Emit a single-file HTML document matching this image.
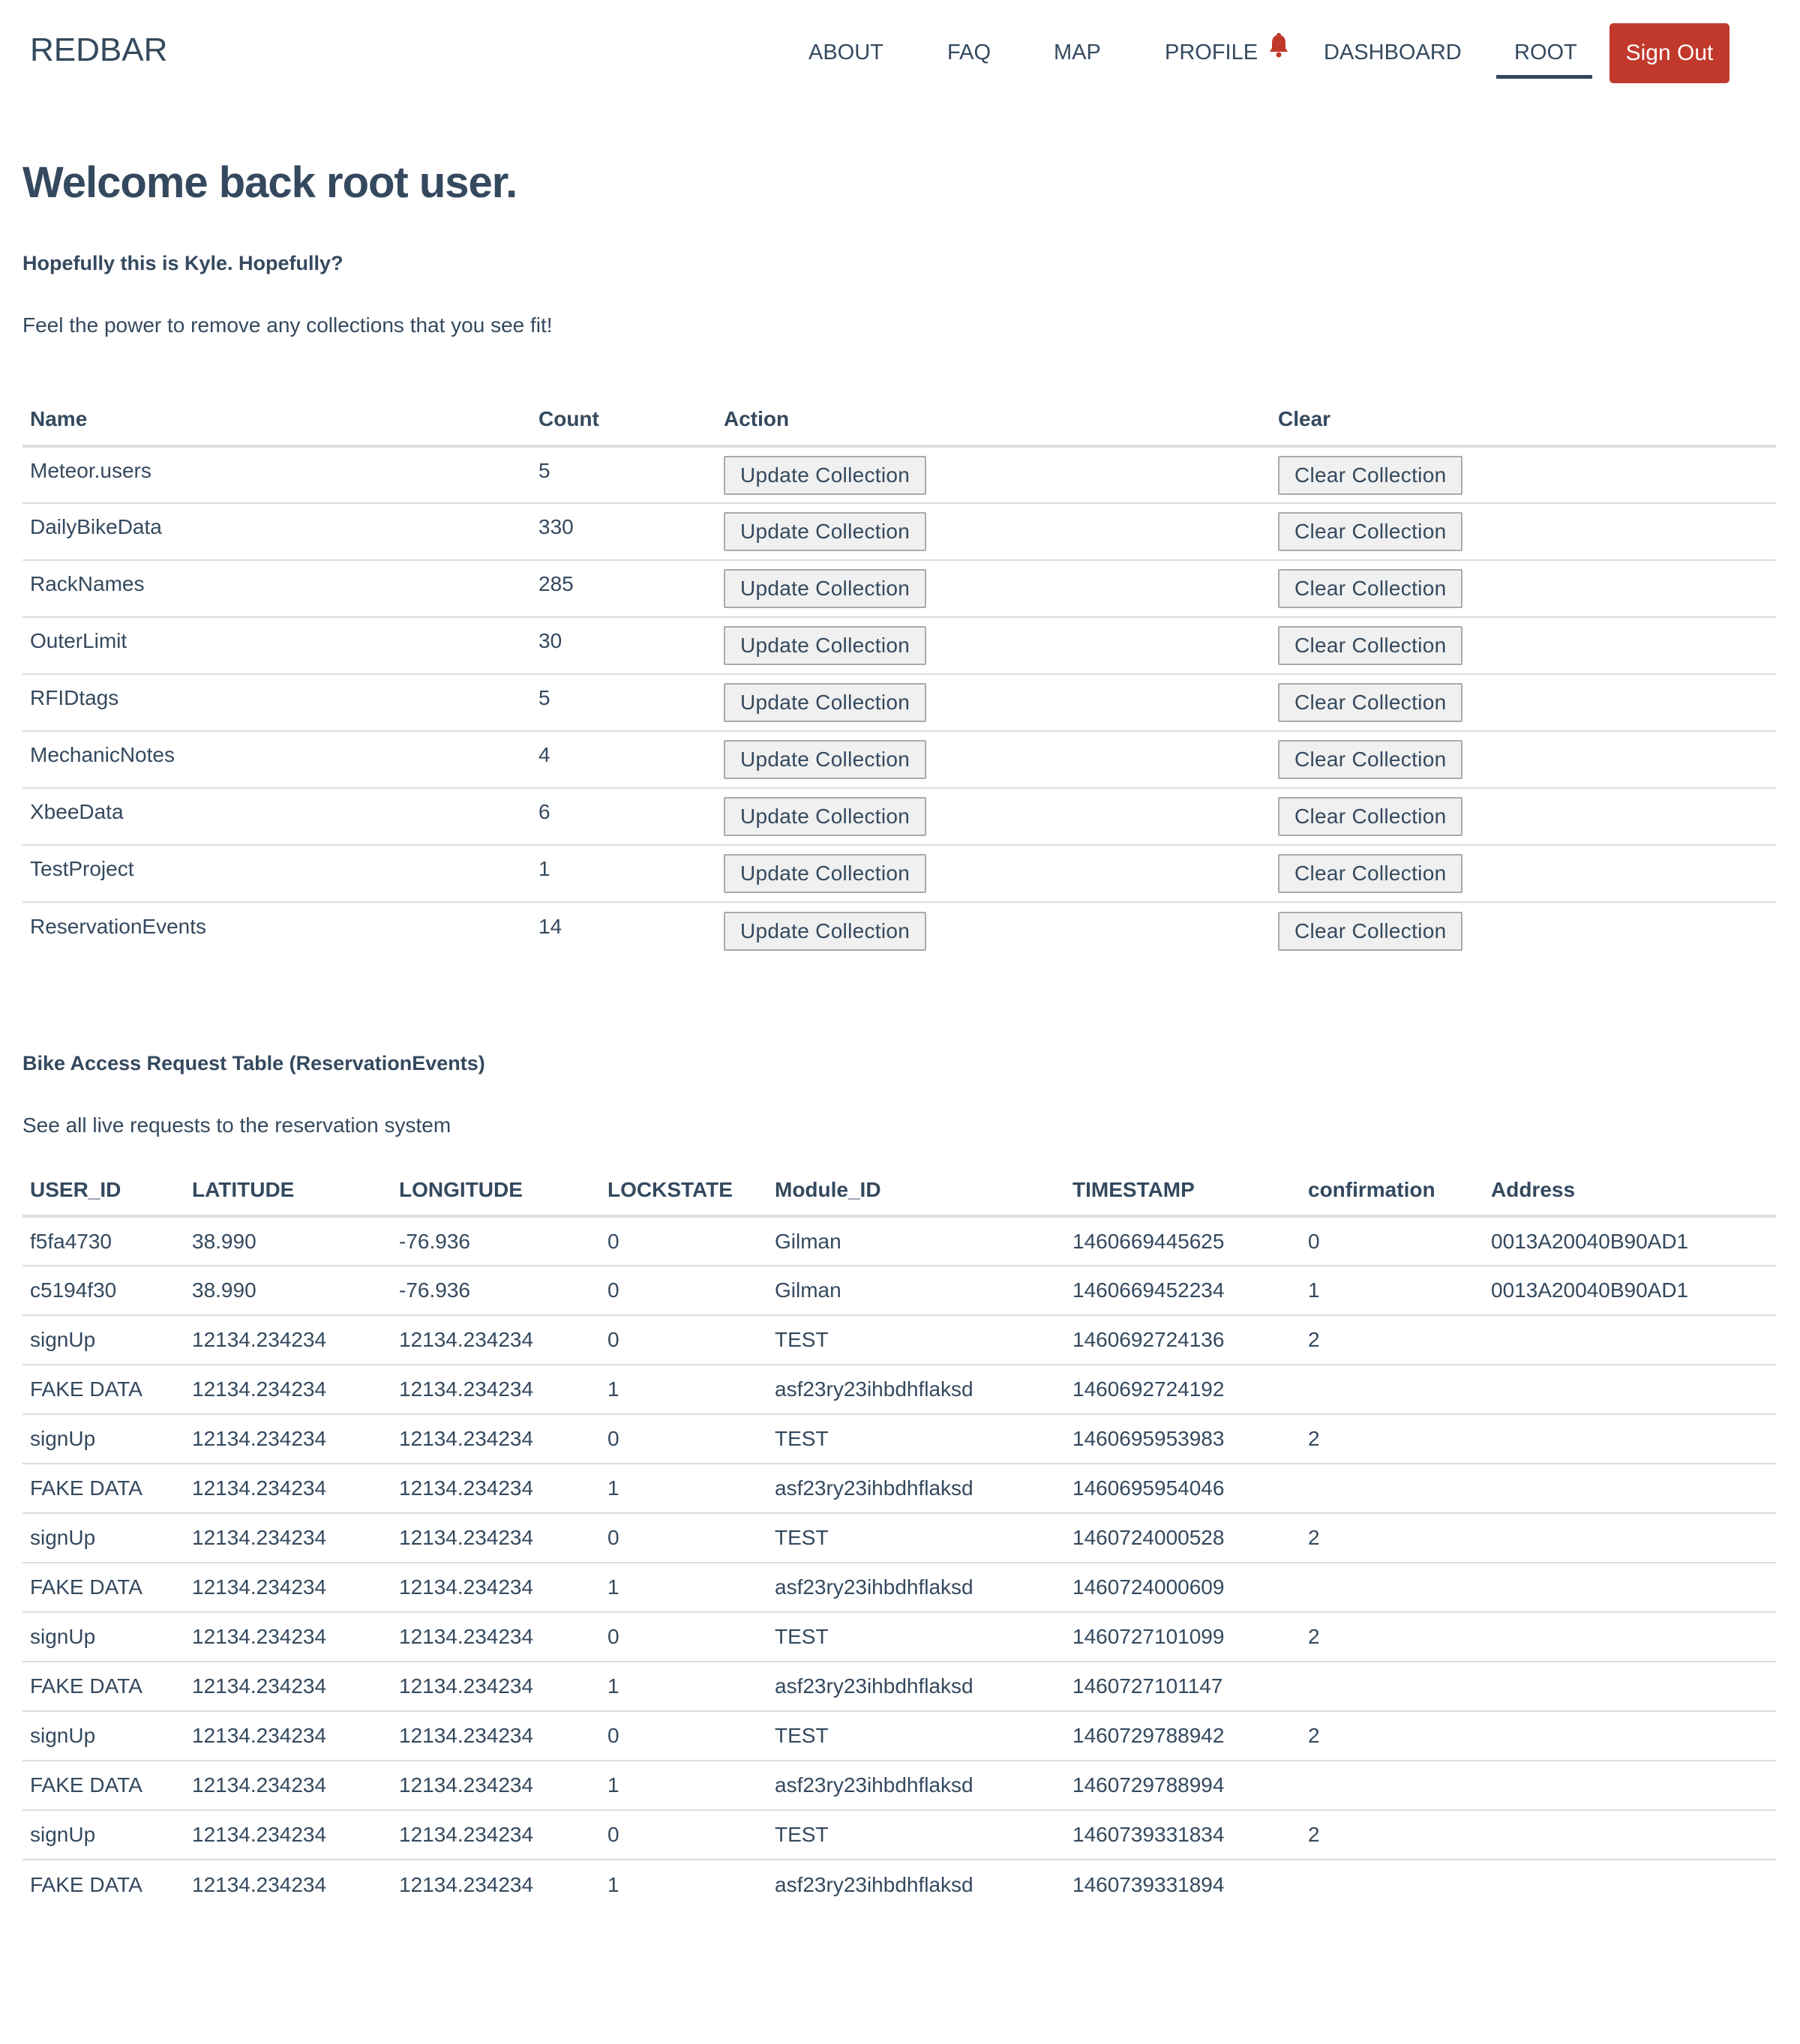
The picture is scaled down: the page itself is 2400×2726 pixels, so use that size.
<!DOCTYPE html>
<html><head><meta charset="utf-8"><style>
*{box-sizing:border-box;margin:0;padding:0}
body{width:2400px;height:2726px;background:#fff;font-family:"Liberation Sans",sans-serif;color:#34495e;position:relative;overflow:hidden}
.abs{position:absolute;white-space:nowrap}
.nav{font-size:29px;top:54px}
h1{position:absolute;left:30px;top:210px;font-size:58px;font-weight:bold;letter-spacing:-1px}
table{position:absolute;left:30px;width:2338px;border-collapse:collapse;table-layout:fixed}
td,th{text-align:left;padding:0 0 0 10px;font-size:28px;white-space:nowrap;overflow:hidden}
th{font-weight:bold;border-bottom:4px solid #ddd}
#t1 th{height:70px;vertical-align:middle}
#t1 td{height:76px;border-bottom:2px solid #ddd;vertical-align:middle}
#t1 td:nth-child(-n+2){padding-bottom:12px}
.btn{display:inline-block;border:2px solid #aaa;background:#f0f0f0;height:52px;line-height:48px;padding:0 20px;font-size:28px;color:#34495e;border-radius:2px;letter-spacing:0.3px}
#t2 th{height:68px}
#t2 td{height:66px;border-bottom:2px solid #ddd}
</style></head><body>
<div class="abs" style="left:40px;top:42px;font-size:44px">REDBAR</div>
<div class="abs nav" style="left:1078px">ABOUT</div>
<div class="abs nav" style="left:1263px">FAQ</div>
<div class="abs nav" style="left:1405px">MAP</div>
<div class="abs nav" style="left:1553px">PROFILE</div>
<svg class="abs" style="left:1690px;top:42px" width="30" height="36" viewBox="0 0 30 36"><path d="M15 2c-2 0-3 1.5-3 3C7 7 6 11 6 16v6l-3 5h24l-3-5v-6c0-5-1-9-6-11 0-1.5-1-3-3-3z" fill="#c0392b"/><circle cx="15" cy="31" r="3.5" fill="#c0392b"/></svg>
<div class="abs nav" style="left:1765px">DASHBOARD</div>
<div class="abs nav" style="left:2019px">ROOT</div>
<div class="abs" style="left:1995px;top:100px;width:128px;height:5px;background:#34495e"></div>
<div class="abs" style="left:2146px;top:31px;width:160px;height:80px;background:#c0392b;border-radius:5px;color:#fff;font-size:30px;line-height:80px;text-align:center">Sign Out</div>
<h1>Welcome back root user.</h1>
<div class="abs" style="left:30px;top:336px;font-size:27px;font-weight:bold">Hopefully this is Kyle. Hopefully?</div>
<div class="abs" style="left:30px;top:418px;font-size:28px">Feel the power to remove any collections that you see fit!</div>
<table id="t1" style="top:525px">
<colgroup><col style="width:678px"><col style="width:257px"><col style="width:739px"><col></colgroup>
<tr><th>Name</th><th>Count</th><th style="padding-left:0">Action</th><th style="padding-left:0">Clear</th></tr>
<tr><td>Meteor.users</td><td>5</td><td style="padding-left:0"><span class="btn">Update Collection</span></td><td style="padding-left:0"><span class="btn">Clear Collection</span></td></tr>
<tr><td>DailyBikeData</td><td>330</td><td style="padding-left:0"><span class="btn">Update Collection</span></td><td style="padding-left:0"><span class="btn">Clear Collection</span></td></tr>
<tr><td>RackNames</td><td>285</td><td style="padding-left:0"><span class="btn">Update Collection</span></td><td style="padding-left:0"><span class="btn">Clear Collection</span></td></tr>
<tr><td>OuterLimit</td><td>30</td><td style="padding-left:0"><span class="btn">Update Collection</span></td><td style="padding-left:0"><span class="btn">Clear Collection</span></td></tr>
<tr><td>RFIDtags</td><td>5</td><td style="padding-left:0"><span class="btn">Update Collection</span></td><td style="padding-left:0"><span class="btn">Clear Collection</span></td></tr>
<tr><td>MechanicNotes</td><td>4</td><td style="padding-left:0"><span class="btn">Update Collection</span></td><td style="padding-left:0"><span class="btn">Clear Collection</span></td></tr>
<tr><td>XbeeData</td><td>6</td><td style="padding-left:0"><span class="btn">Update Collection</span></td><td style="padding-left:0"><span class="btn">Clear Collection</span></td></tr>
<tr><td>TestProject</td><td>1</td><td style="padding-left:0"><span class="btn">Update Collection</span></td><td style="padding-left:0"><span class="btn">Clear Collection</span></td></tr>
<tr><td style="border-bottom:none">ReservationEvents</td><td style="border-bottom:none">14</td><td style="padding-left:0;border-bottom:none"><span class="btn">Update Collection</span></td><td style="padding-left:0;border-bottom:none"><span class="btn">Clear Collection</span></td></tr>
</table>
<div class="abs" style="left:30px;top:1403px;font-size:27px;font-weight:bold">Bike Access Request Table (ReservationEvents)</div>
<div class="abs" style="left:30px;top:1485px;font-size:28px">See all live requests to the reservation system</div>
<table id="t2" style="top:1554px">
<colgroup><col style="width:216px"><col style="width:276px"><col style="width:278px"><col style="width:223px"><col style="width:397px"><col style="width:314px"><col style="width:244px"><col></colgroup>
<tr><th>USER_ID</th><th>LATITUDE</th><th>LONGITUDE</th><th>LOCKSTATE</th><th>Module_ID</th><th>TIMESTAMP</th><th>confirmation</th><th>Address</th></tr>
<tr><td>f5fa4730</td><td>38.990</td><td>-76.936</td><td>0</td><td>Gilman</td><td>1460669445625</td><td>0</td><td>0013A20040B90AD1</td></tr>
<tr><td>c5194f30</td><td>38.990</td><td>-76.936</td><td>0</td><td>Gilman</td><td>1460669452234</td><td>1</td><td>0013A20040B90AD1</td></tr>
<tr><td>signUp</td><td>12134.234234</td><td>12134.234234</td><td>0</td><td>TEST</td><td>1460692724136</td><td>2</td><td></td></tr>
<tr><td>FAKE DATA</td><td>12134.234234</td><td>12134.234234</td><td>1</td><td>asf23ry23ihbdhflaksd</td><td>1460692724192</td><td></td><td></td></tr>
<tr><td>signUp</td><td>12134.234234</td><td>12134.234234</td><td>0</td><td>TEST</td><td>1460695953983</td><td>2</td><td></td></tr>
<tr><td>FAKE DATA</td><td>12134.234234</td><td>12134.234234</td><td>1</td><td>asf23ry23ihbdhflaksd</td><td>1460695954046</td><td></td><td></td></tr>
<tr><td>signUp</td><td>12134.234234</td><td>12134.234234</td><td>0</td><td>TEST</td><td>1460724000528</td><td>2</td><td></td></tr>
<tr><td>FAKE DATA</td><td>12134.234234</td><td>12134.234234</td><td>1</td><td>asf23ry23ihbdhflaksd</td><td>1460724000609</td><td></td><td></td></tr>
<tr><td>signUp</td><td>12134.234234</td><td>12134.234234</td><td>0</td><td>TEST</td><td>1460727101099</td><td>2</td><td></td></tr>
<tr><td>FAKE DATA</td><td>12134.234234</td><td>12134.234234</td><td>1</td><td>asf23ry23ihbdhflaksd</td><td>1460727101147</td><td></td><td></td></tr>
<tr><td>signUp</td><td>12134.234234</td><td>12134.234234</td><td>0</td><td>TEST</td><td>1460729788942</td><td>2</td><td></td></tr>
<tr><td>FAKE DATA</td><td>12134.234234</td><td>12134.234234</td><td>1</td><td>asf23ry23ihbdhflaksd</td><td>1460729788994</td><td></td><td></td></tr>
<tr><td>signUp</td><td>12134.234234</td><td>12134.234234</td><td>0</td><td>TEST</td><td>1460739331834</td><td>2</td><td></td></tr>
<tr><td style="border:none">FAKE DATA</td><td style="border:none">12134.234234</td><td style="border:none">12134.234234</td><td style="border:none">1</td><td style="border:none">asf23ry23ihbdhflaksd</td><td style="border:none">1460739331894</td><td style="border:none"></td><td style="border:none"></td></tr>
</table>
</body></html>
